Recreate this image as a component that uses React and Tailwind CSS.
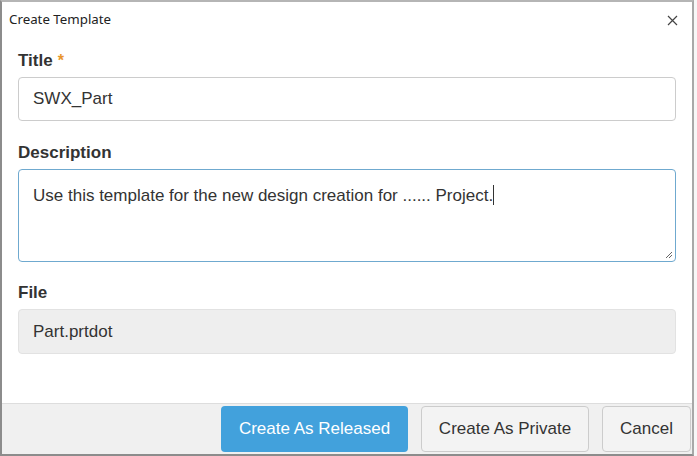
export default function App() {
    return (
        <div className="w-[697px] h-[456px] bg-[#f7f7f7] overflow-hidden" style={{ fontFamily: '"Liberation Sans", Arial, sans-serif' }}>
            <div className="w-[694px] h-[456px] bg-white border-2 border-[#8c8c8c] border-t-[#b5b5b5] border-r-[#a8a8a8] flex flex-col">
                {/* Header */}
                <div className="h-[36px] flex items-center justify-between pl-[7px] pr-[14px]">
                    <span className="text-[13.3px] text-[#222]" style={{ fontFamily: '"Noto Sans", "Open Sans", sans-serif' }}>Create Template</span>
                    <svg width="11" height="11" viewBox="0 0 11 11" className="text-[#444]">
                        <path d="M1 1L10 10M10 1L1 10" stroke="currentColor" strokeWidth="1.2" />
                    </svg>
                </div>

                {/* Body */}
                <div className="flex-1 px-[16px] pt-[12px]">
                    <div className="h-[22px] mb-[5px] flex items-center text-[17px] font-bold text-[#333]">
                        Title<span className="text-[#e8962c] ml-[5px] text-[16px]">*</span>
                    </div>
                    <div className="h-[44px] border border-[#ccc] rounded-[4px] flex items-center px-[14px] text-[17px] text-[#333]">
                        SWX_Part
                    </div>

                    <div className="h-[22px] mt-[21px] mb-[5px] flex items-center text-[17px] font-bold text-[#333]">
                        Description
                    </div>
                    <div className="relative h-[93px] border border-[#6fa9cf] rounded-[4px] px-[14px] pt-[13px] text-[17px] text-[#333]">
                        Use this template for the new design creation for ...... Project.<span className="inline-block w-px h-[20px] bg-[#333] align-[-4px]" />
                        <svg width="9" height="9" viewBox="0 0 9 9" className="absolute right-[2px] bottom-[2px]">
                            <path d="M8 2L2 8M8 5L5 8" stroke="#666" strokeWidth="1" />
                        </svg>
                    </div>

                    <div className="h-[22px] mt-[20px] mb-[5px] flex items-center text-[17px] font-bold text-[#333]">
                        File
                    </div>
                    <div className="h-[45px] border border-[#e2e2e2] bg-[#eee] rounded-[4px] flex items-center px-[14px] text-[17px] text-[#333]">
                        Part.prtdot
                    </div>
                </div>

                {/* Footer */}
                <div className="h-[51px] border-t border-[#ddd] bg-[#f0f0f0] flex items-start justify-end gap-[13px] pt-[2px] pr-[1px]">
                    <button className="h-[46px] w-[187px] rounded-[4px] bg-[#42a1dc] text-white text-[17px]">Create As Released</button>
                    <button className="h-[46px] w-[168px] rounded-[4px] bg-[#f3f3f3] border border-[#ccc] text-[#333] text-[17px]">Create As Private</button>
                    <button className="h-[46px] w-[89px] rounded-[4px] bg-[#f3f3f3] border border-[#ccc] text-[#333] text-[17px]">Cancel</button>
                </div>
            </div>
        </div>
    );
}
